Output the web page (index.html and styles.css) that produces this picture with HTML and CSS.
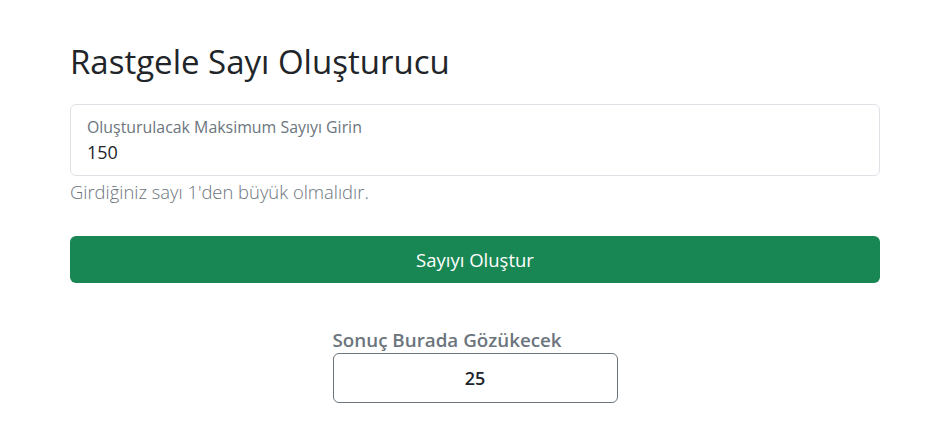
FILE: index.html
```html
<!DOCTYPE html>
<html lang="tr">
<head>
<meta charset="utf-8">
<title>Rastgele Sayı Oluşturucu</title>
<link rel="stylesheet" href="styles.css">
</head>
<body>
<main class="page">
  <h1 class="title">Rastgele Sayı Oluşturucu</h1>
  <div class="field">
    <label class="field-label" for="max">Oluşturulacak Maksimum Sayıyı Girin</label>
    <input class="field-input" id="max" type="text" value="150">
  </div>
  <p class="help">Girdiğiniz sayı 1'den büyük olmalıdır.</p>
  <button class="btn-generate" type="button">Sayıyı Oluştur</button>
  <section class="result">
    <div class="result-inner">
      <div class="result-label">Sonuç Burada Gözükecek</div>
      <div class="result-box">25</div>
    </div>
  </section>
</main>
</body>
</html>
```
FILE: styles.css
```css
* { box-sizing: border-box; }
html, body { margin: 0; padding: 0; background: #fff; }
body {
  font-family: "Open Sans", "Noto Sans", sans-serif;
  color: #212529;
}
.page {
  width: 810px;
  margin-left: 70px;
  padding-top: 38px;
}
.title {
  margin: 0 0 18px 0;
  font-size: 33px;
  font-weight: 400;
  line-height: 48px;
  color: #212529;
}
.field {
  display: flex;
  flex-direction: column;
  height: 72px;
  border: 1px solid #dee2e6;
  border-radius: 6px;
  padding: 11px 16px 0 16px;
}
.field-label {
  font-size: 15.9px;
  line-height: 22px;
  color: #6c757d;
}
.field-input {
  border: 0;
  outline: 0;
  padding: 0;
  margin-top: 1px;
  font-family: inherit;
  font-size: 18px;
  line-height: 26px;
  color: #212529;
  background: transparent;
}
.help {
  margin: 3px 0 0 0;
  font-size: 18.4px;
  line-height: 26px;
  font-weight: 300;
  color: #6c757d;
}
.btn-generate {
  display: block;
  width: 100%;
  height: 47px;
  margin-top: 31px;
  border: 0;
  border-radius: 6px;
  background: #198754;
  color: #fff;
  font-family: inherit;
  font-size: 18.5px;
  line-height: 26px;
}
.result {
  display: flex;
  justify-content: center;
  margin-top: 44px;
}
.result-inner {
  width: 285px;
}
.result-label {
  font-size: 18.8px;
  font-weight: 600;
  line-height: 26px;
  color: #6c757d;
}
.result-box {
  height: 50px;
  border: 1px solid #6c757d;
  border-radius: 6px;
  display: flex;
  align-items: center;
  justify-content: center;
  font-size: 18px;
  font-weight: 600;
  color: #212529;
}
```
